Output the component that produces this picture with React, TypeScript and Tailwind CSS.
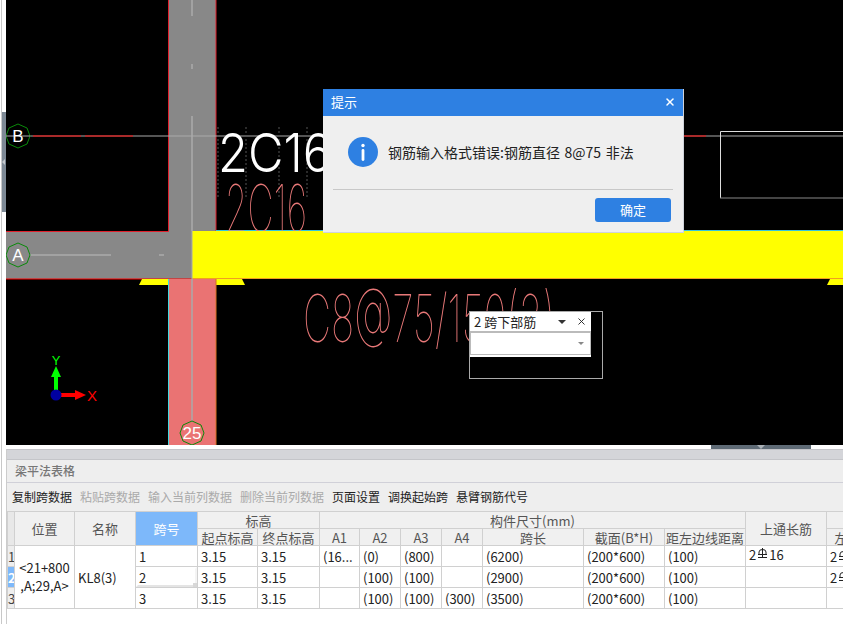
import { X } from 'lucide-react';

const cjk = { fontFamily: '"Noto Sans CJK SC", sans-serif' };

const toolbar = [
  { name: '复制跨数据', off: false },
  { name: '粘贴跨数据', off: true },
  { name: '输入当前列数据', off: true },
  { name: '删除当前列数据', off: true },
  { name: '页面设置', off: false },
  { name: '调换起始跨', off: false },
  { name: '悬臂钢筋代号', off: false },
];

const widths = [7, 60, 61, 62, 60, 62, 40, 41, 41, 41, 101, 81, 81, 81, 81];

const rows = [
  { span: '1', a1: '(16...', a2: '(0)', a3: '(800)', a4: '', len: '(6200)', top: true, left: true },
  { span: '2', a1: '', a2: '(100)', a3: '(100)', a4: '', len: '(2900)', top: false, left: true },
  { span: '3', a1: '', a2: '(100)', a3: '(100)', a4: '(300)', len: '(3500)', top: false, left: false },
];

function Rebar() {
  return (
    <svg width="9" height="11" viewBox="0 0 9 11" className="inline-block mx-[2px] align-[1px]" fill="none" stroke="#222" strokeWidth="1">
      <path d="M1 6.500V4Q1 1.500 4.500 1.500Q8 1.500 8 4V6.500M0 6.500H9M4.500 0V9.500M0 9.500H9" />
    </svg>
  );
}

function Drawing() {
  return (
    <svg className="w-full h-full block" viewBox="6 0 837 445">
      <rect x="6" y="0" width="837" height="445" fill="#000" />
      {/* beams */}
      <rect x="168" y="0" width="48" height="232" fill="#888" />
      <rect x="6" y="231" width="186" height="48" fill="#888" />
      <path d="M168.500 0V231.500H6M216 0V231" stroke="#e0202c" fill="none" />
      <path d="M6 279H192" stroke="#ff0000" />
      <rect x="192" y="231" width="651" height="47" fill="#ff0" />
      <path d="M216 230.500H843" stroke="#35c4dc" />
      <path d="M192 278.500H843" stroke="#f0a020" />
      <polygon points="142,279 242,279 245,285 139,285" fill="#ff0" />
      <polygon points="830,279 843,279 843,285 827,285" fill="#ff0" />
      <rect x="168" y="279" width="48" height="166" fill="#ea7373" />
      <path d="M168.500 279V445" stroke="#3fd8e0" />
      <path d="M216 279V445" stroke="#d87020" />
      {/* axis lines */}
      <path d="M192 0V16M192 64V69M192 116V231M192 279V422" stroke="#aaa" strokeWidth="1.500" fill="none" />
      <path d="M192 231V279" stroke="#aaa" />
      <path d="M30 136H843" stroke="#aaa" />
      <path d="M33 136H81M85 136H133M683 136H706" stroke="#f00" />
      <path d="M30 255H111M159 255H164" stroke="#aaa" strokeWidth="1.500" />
      <path d="M218 127V198M246 127V198M279 127V198M307 127V198" stroke="#555" strokeDasharray="2 2" />
      {/* cad texts */}
      <text x="218" y="172" fill="#fff" fontFamily="Inter" fontWeight="300" fontSize="54" textLength="114" lengthAdjust="spacingAndGlyphs">2C16</text>
      <g clipPath="url(#cut)">
        <text x="225" y="232" fill="#e87878" fontFamily="Inter" fontWeight="100" fontSize="66" textLength="82" lengthAdjust="spacingAndGlyphs">2C16</text>
      </g>
      <clipPath id="cut"><rect x="200" y="170" width="200" height="61" /></clipPath>
      <text x="303" y="342" fill="#e87878" fontFamily="Inter" fontWeight="100" fontSize="66" textLength="252" lengthAdjust="spacingAndGlyphs">C8@75/150(2)</text>
      {/* grid bubbles */}
      <polygon points="18,124 27,128 30,136 27,144 18,148 9,144 6,136 9,128" fill="#000" stroke="#0a8a0a" />
      <path d="M6 136H30" stroke="#aaa" />
      <text x="18" y="142" textAnchor="middle" fill="#fff" fontFamily="Liberation Sans" fontSize="17">B</text>
      <polygon points="18,243 27,247 30,255 27,263 18,267 9,263 6,255 9,247" fill="none" stroke="#0a8a0a" />
      <text x="18" y="261" textAnchor="middle" fill="#fff" fontFamily="Liberation Sans" fontSize="17">A</text>
      <polygon points="192,421 201,425 204,433 201,441 192,445 183,441 180,433 183,425" fill="#ea7373" stroke="#0a8a0a" />
      <text x="192" y="439" textAnchor="middle" fill="#fff" fontFamily="Liberation Sans" fontSize="17">25</text>
      {/* axis gizmo */}
      <rect x="54" y="376" width="4" height="19" fill="#0f0" />
      <polygon points="56,366 61,377 51,377" fill="#0f0" />
      <rect x="56" y="393" width="20" height="4" fill="#f00" />
      <polygon points="86,395 75,390 75,400" fill="#f00" />
      <circle cx="56" cy="395" r="5.500" fill="#0000a0" />
      <text x="56" y="365" textAnchor="middle" fill="#0f0" fontFamily="Liberation Sans" fontSize="13">Y</text>
      <text x="92" y="401" textAnchor="middle" fill="#f00" fontFamily="Liberation Sans" fontSize="15">X</text>
      {/* right box */}
      <path d="M720.500 198V131.500H843" stroke="#ddd" fill="none" />
      <path d="M720 198H843" stroke="#888" />
    </svg>
  );
}

export default function App() {
  return (
    <div className="relative w-[843px] h-[624px] overflow-hidden bg-white flex text-[#222]" style={cjk}>
      {/* left gutter */}
      <div className="w-[6px] shrink-0 relative">
        <div className="absolute left-[1px] top-0 bottom-0 w-px bg-[#c8c8c8]" />
        <div className="absolute left-[2px] top-[112px] w-[4px] h-[100px] bg-[#7d8995] flex items-center">
          <span className="w-0 h-0 border-y-[3px] border-y-transparent border-r-[3px] border-r-[#c4c8cc]" />
        </div>
      </div>

      <div className="flex-1 min-w-0 flex flex-col">
        <div className="h-[445px] shrink-0 relative">
          <Drawing />
        </div>

        {/* splitter */}
        <div className="h-[4px] shrink-0 bg-white flex justify-end pr-[32px]">
          <div className="w-[100px] bg-[#5f6b76] flex justify-center">
            <span className="w-0 h-0 border-x-[4px] border-x-transparent border-t-[4px] border-t-[#aab0b6]" />
          </div>
        </div>

        {/* panel */}
        <div className="flex-1 min-h-0 flex flex-col border-l border-[#ccc] bg-white">
          <div className="h-[11px] bg-[#d4d5d9] border-y border-[#c4c5c9] shrink-0" />
          <div className="h-[23px] bg-[#eee] border-b border-[#d0d0d8] shrink-0 flex items-center pl-[8px] text-[12px] font-medium text-[#777]">
            梁平法表格
          </div>
          <div className="h-[28px] bg-[#eee] shrink-0 flex items-center gap-[8px] pl-[5px] text-[12px]">
            {toolbar.map((item) => (
              <span key={item.name} className={item.off ? 'text-[#aaa]' : 'text-[#222]'}>
                {item.name}
              </span>
            ))}
          </div>

          <table className="table-fixed border-collapse w-[837px] text-[13px] leading-none bg-white [&_td]:border [&_td]:border-[#d0d0d0] [&_th]:border [&_th]:border-[#d0d0d0] [&_th]:font-normal [&_th]:text-[#555] [&_th]:bg-[#f0f0f0]">
            <colgroup>
              {widths.map((w, i) => (
                <col key={i} style={{ width: w }} />
              ))}
            </colgroup>
            <thead>
              <tr className="h-[17px]">
                <th rowSpan={2} className="!bg-[#e8e8e8]" />
                <th rowSpan={2}>位置</th>
                <th rowSpan={2}>名称</th>
                <th rowSpan={2} className="!bg-[#7db8fa] !text-white font-medium">跨号</th>
                <th colSpan={2}>标高</th>
                <th colSpan={7}>构件尺寸(mm)</th>
                <th rowSpan={2}>上通长筋</th>
                <th />
              </tr>
              <tr className="h-[17px]">
                <th>起点标高</th>
                <th>终点标高</th>
                <th>A1</th>
                <th>A2</th>
                <th>A3</th>
                <th>A4</th>
                <th>跨长</th>
                <th>截面(B*H)</th>
                <th>距左边线距离</th>
                <th className="whitespace-nowrap overflow-hidden">左支座钢筋</th>
              </tr>
            </thead>
            <tbody>
              {rows.map((r, i) => (
                <tr key={r.span} className="h-[21px] [&_td]:px-[3px] [&_td]:whitespace-nowrap [&_td]:overflow-hidden">
                  <td className={i === 1 ? '!px-0 text-center !bg-[#7db8fa] text-white font-bold' : '!px-0 text-center !bg-[#eee] text-[#444]'}>{r.span}</td>
                  {i === 0 && (
                    <td rowSpan={3} className="!whitespace-normal !leading-[18px] !px-[4px] text-center">
                      &lt;21+800 ,A;29,A&gt;
                    </td>
                  )}
                  {i === 0 && <td rowSpan={3}>KL8(3)</td>}
                  <td className="relative">
                    {r.span}
                    {i === 1 && (
                      <>
                        <span className="absolute inset-0 border-2 border-white border-b-[#e4e4e4] border-r-[#f4f4f4]" />
                        <span className="absolute right-0 bottom-0 w-[4px] h-[4px] bg-[#d8d8d8]" />
                      </>
                    )}
                  </td>
                  <td>3.15</td>
                  <td>3.15</td>
                  <td>{r.a1}</td>
                  <td>{r.a2}</td>
                  <td>{r.a3}</td>
                  <td>{r.a4}</td>
                  <td>{r.len}</td>
                  <td>(200*600)</td>
                  <td>(100)</td>
                  <td className="!pb-[3px]">
                    {r.top && (
                      <>
                        2<Rebar />16
                      </>
                    )}
                  </td>
                  <td>
                    {r.left && (
                      <>
                        2<Rebar />16
                      </>
                    )}
                  </td>
                </tr>
              ))}
            </tbody>
          </table>
        </div>
      </div>

      {/* message dialog */}
      <div className="absolute left-[323px] top-[89px] w-[361px] h-[144px] bg-[#efefef] border-b border-r border-[#cfd3da] flex flex-col">
        <div className="h-[27px] bg-[#2e80e2] shrink-0 flex items-center justify-between pl-[8px] pr-[7px] pb-[1px] text-white text-[13px]">
          <span>提示</span>
          <X className="w-[12px] h-[12px]" strokeWidth={3} />
        </div>
        <div className="h-[74px] mx-[10px] border-b border-[#c8c8c8] flex items-center pl-[15px] gap-[10px] shrink-0 pb-[1px]">
          <svg width="30" height="30" viewBox="0 0 30 30">
            <circle cx="15" cy="15" r="15" fill="#2e80e2" />
            <circle cx="15" cy="8.500" r="1.700" fill="#fff" />
            <rect x="13.600" y="12" width="2.800" height="12" rx="1.400" fill="#fff" />
          </svg>
          <span className="text-[14px] text-[#222] whitespace-nowrap [word-spacing:1.500px]">钢筋输入格式错误:钢筋直径 8@75 非法</span>
        </div>
        <div className="flex justify-end pr-[12px] pt-[8px]">
          <button className="w-[76px] h-[24px] rounded-[3px] bg-[#2e80e2] text-white text-[13px]">确定</button>
        </div>
      </div>

      {/* span editor popup */}
      <div className="absolute left-[469px] top-[311px] w-[134px] h-[68px] border border-[#aaa] bg-black">
        <div className="w-[121px] bg-white">
          <div className="h-[20px] flex items-center px-[4px] text-[13px] text-[#222] border-b border-[#bbb]">
            <span className="flex-1 whitespace-nowrap">2 跨下部筋</span>
            <span className="w-0 h-0 border-x-[4px] border-x-transparent border-t-[4px] border-t-[#333] mr-[10px]" />
            <X className="w-[11px] h-[11px]" strokeWidth={2} />
          </div>
          <div className="h-[23px] border border-[#bbb] flex items-center justify-end pr-[6px]">
            <span className="w-0 h-0 border-x-[3px] border-x-transparent border-t-[3px] border-t-[#888]" />
          </div>
          <div className="h-[2px]" />
        </div>
      </div>
    </div>
  );
}
